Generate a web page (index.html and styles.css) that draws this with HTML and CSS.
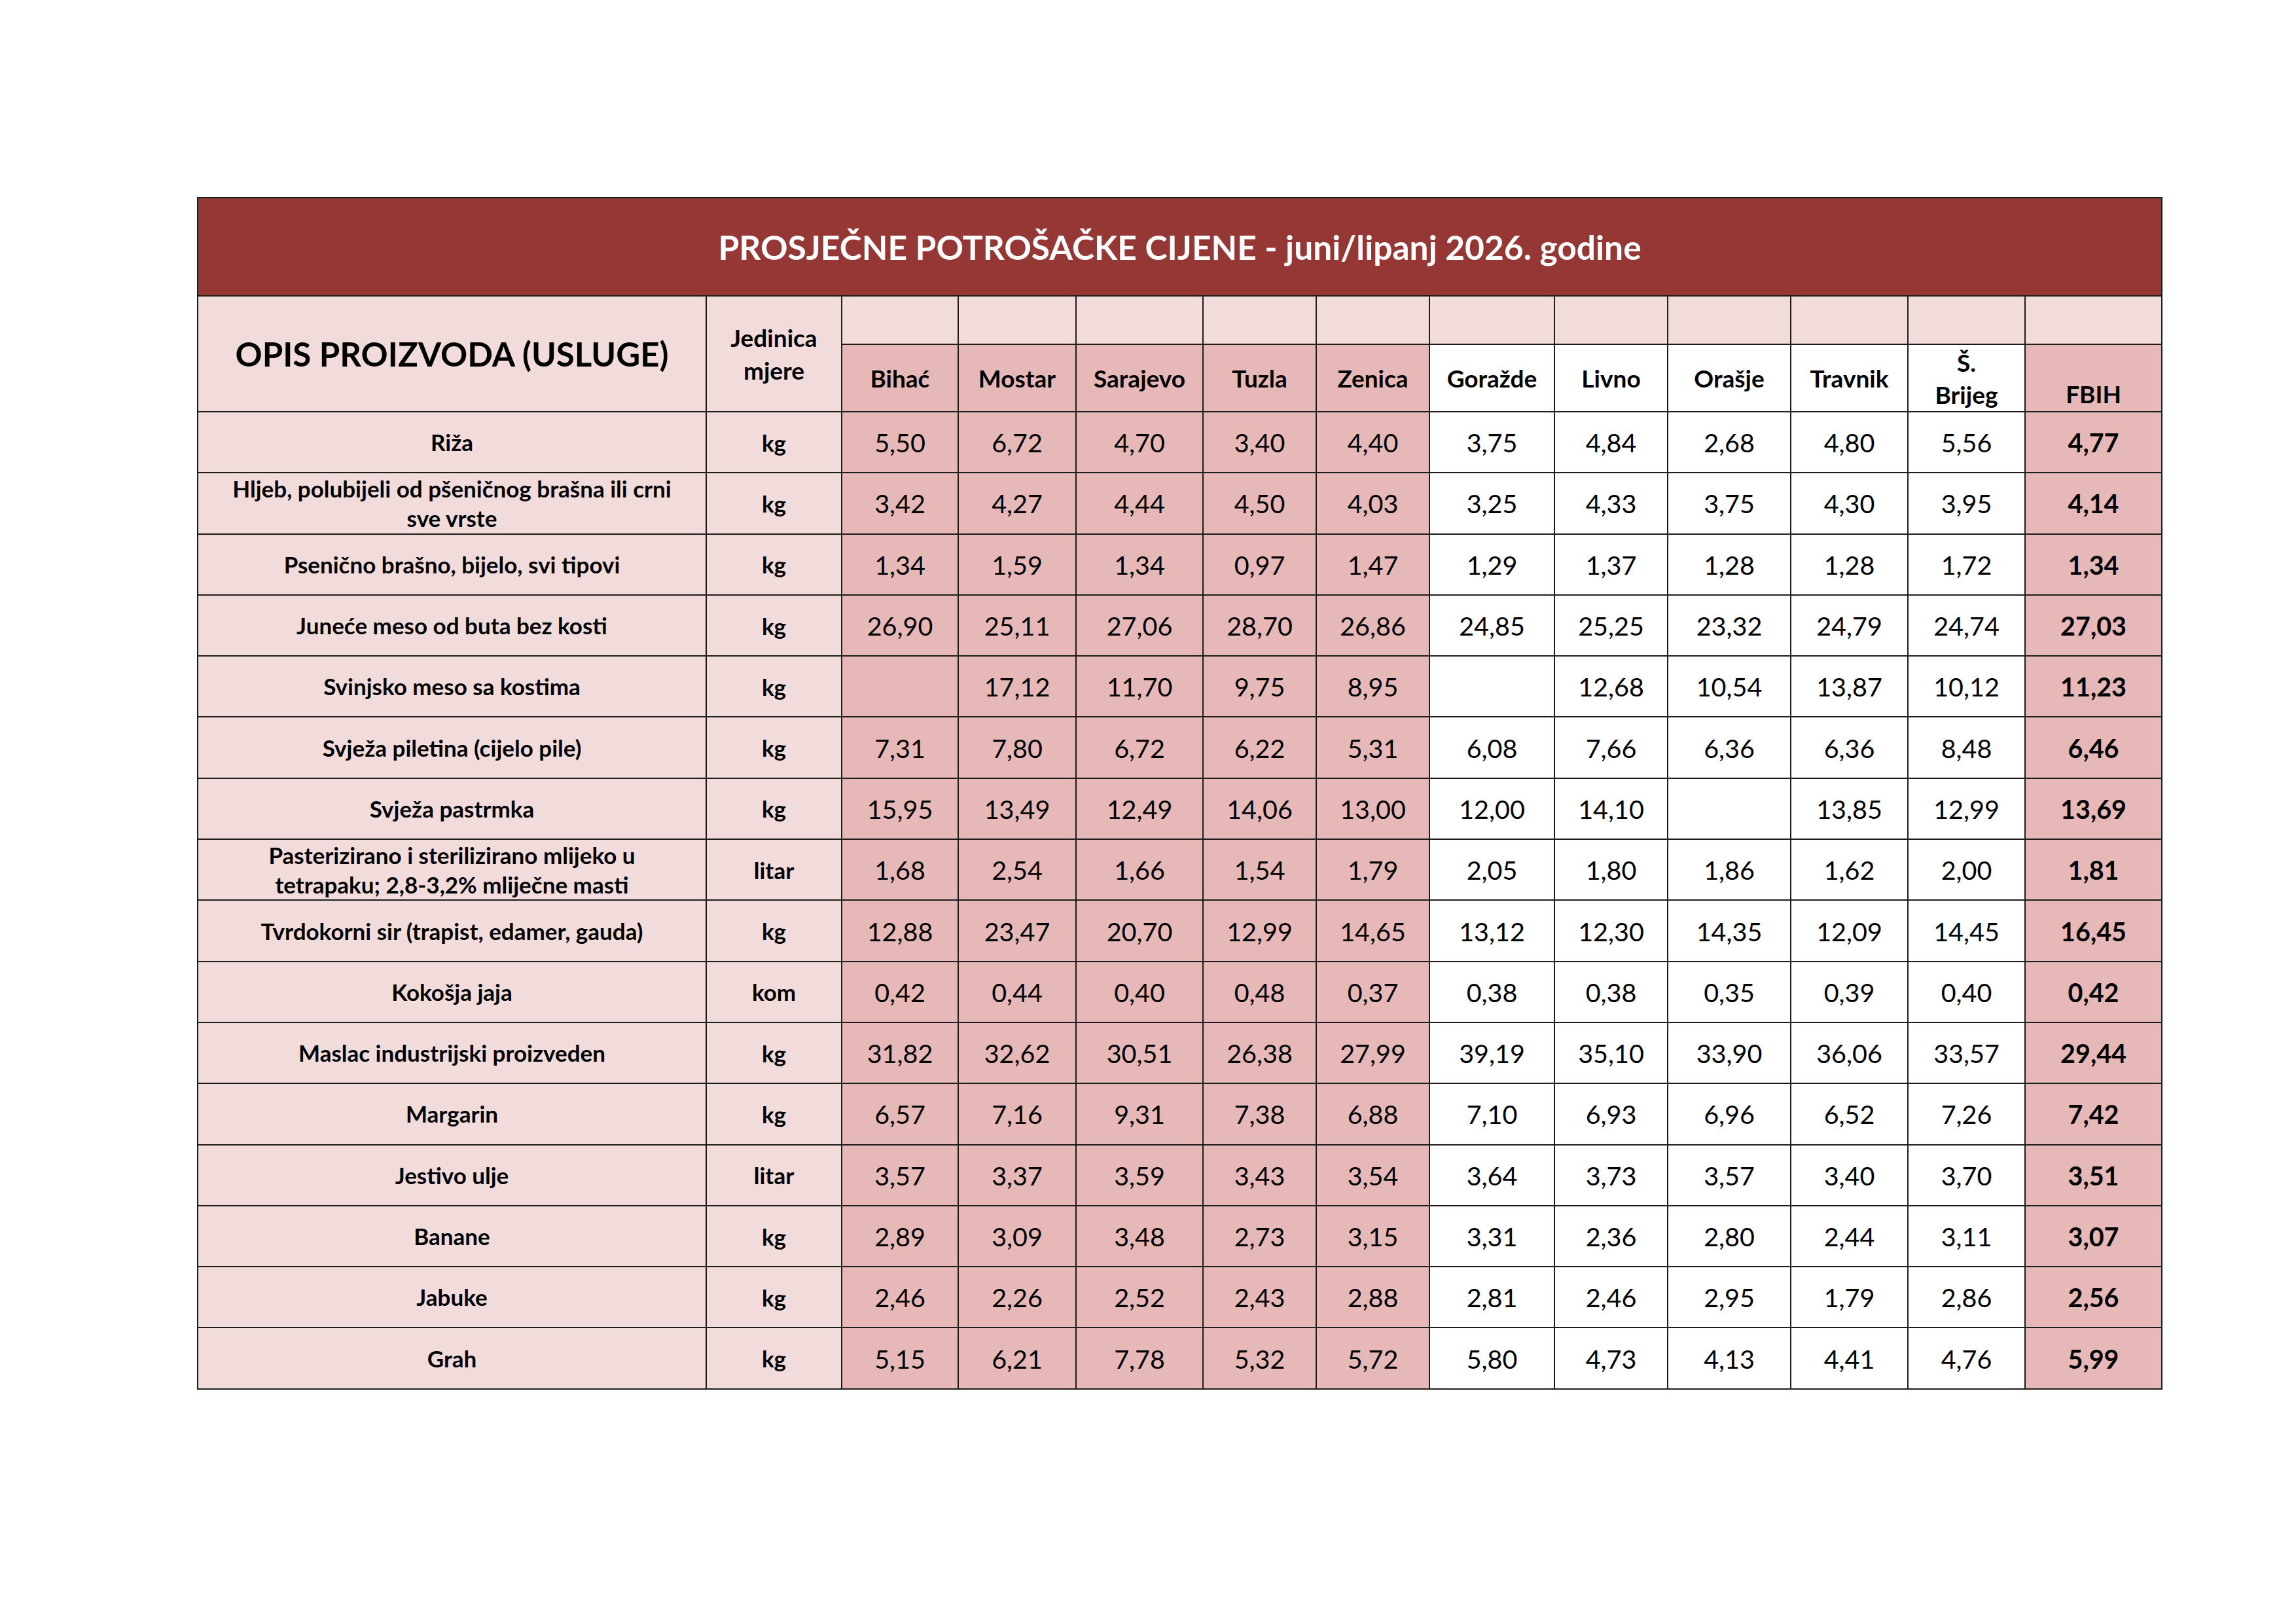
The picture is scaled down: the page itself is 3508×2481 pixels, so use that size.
FILE: index.html
```html
<!DOCTYPE html>
<html lang="bs">
<head>
<meta charset="utf-8">
<title>Prosječne potrošačke cijene</title>
<link rel="stylesheet" href="styles.css">
</head>
<body>
<div class="page">
<table class="prices">
<colgroup>
<col class="c-desc"><col class="c-unit">
<col class="c-bih"><col class="c-mos"><col class="c-sar"><col class="c-tuz"><col class="c-zen">
<col class="c-gor"><col class="c-liv"><col class="c-ora"><col class="c-tra"><col class="c-sbr">
<col class="c-fbih">
</colgroup>
<thead>
<tr class="r-title"><th colspan="13" class="title">PROSJEČNE POTROŠAČKE CIJENE - juni/lipanj 2026. godine</th></tr>
<tr class="r-h1">
<th rowspan="2" class="desc-h light">OPIS PROIZVODA (USLUGE)</th>
<th rowspan="2" class="unit-h light">Jedinica<br>mjere</th>
<th class="light"></th><th class="light"></th><th class="light"></th><th class="light"></th><th class="light"></th>
<th class="light"></th><th class="light"></th><th class="light"></th><th class="light"></th><th class="light"></th>
<th class="light"></th>
</tr>
<tr class="r-h2">
<th class="city mid">Bihać</th><th class="city mid">Mostar</th><th class="city mid">Sarajevo</th><th class="city mid">Tuzla</th><th class="city mid">Zenica</th>
<th class="city">Goražde</th><th class="city">Livno</th><th class="city">Orašje</th><th class="city">Travnik</th><th class="city">Š.<br>Brijeg</th>
<th class="city mid bottom">FBIH</th>
</tr>
</thead>
<tbody id="rows"></tbody>
</table>
</div>
<script src="app.js"></script>
</body>
</html>
```
FILE: styles.css
```css
html, body {
  margin: 0;
  padding: 0;
  background: #ffffff;
}
.page {
  padding: 301px 0 0 301px;
}
.prices {
  border-collapse: collapse;
  table-layout: fixed;
  width: 3001px;
  font-family: Lato, "Open Sans", "DejaVu Sans", sans-serif;
  color: #000000;
}
.prices th, .prices td {
  border: 2px solid #1c1c1c;
  padding: 0;
  text-align: center;
  vertical-align: middle;
}
.c-desc { width: 777px; }
.c-unit { width: 207px; }
.c-bih { width: 178px; }
.c-mos { width: 180px; }
.c-sar { width: 194px; }
.c-tuz { width: 173px; }
.c-zen { width: 173px; }
.c-gor { width: 191px; }
.c-liv { width: 173px; }
.c-ora { width: 188px; }
.c-tra { width: 179px; }
.c-sbr { width: 179px; }
.c-fbih { width: 209px; }

.r-title { height: 150px; }
.r-h1 { height: 74px; }
.r-h2 { height: 103px; }
.r-data { height: 93.3px; }

.title {
  background: #953735;
  color: #ffffff;
  font-size: 51.5px;
  font-weight: 700;
  border-color: #3a3a3a;
}
.light { background: #f2dcdb; }
.mid { background: #e6b8b7; }
.desc-h {
  font-size: 51px;
  font-weight: 700;
}
.unit-h {
  font-size: 37px;
  font-weight: 700;
  line-height: 50px;
}
.city {
  font-size: 37px;
  font-weight: 700;
  line-height: 49px;
}
.city.bottom {
  vertical-align: bottom;
  padding-bottom: 2px;
}
.label {
  background: #f2dcdb;
  font-size: 35px;
  font-weight: 700;
  line-height: 45px;
  white-space: nowrap;
}
.unit {
  background: #f2dcdb;
  font-size: 35px;
  font-weight: 700;
}
.num {
  font-size: 39.5px;
  font-weight: 400;
}
.num.mid { background: #e6b8b7; }
.num.total {
  background: #e6b8b7;
  font-weight: 700;
}
```
FILE: app.js
```js
var data = [
  ["Riža", "kg", ["5,50","6,72","4,70","3,40","4,40","3,75","4,84","2,68","4,80","5,56","4,77"]],
  ["Hljeb, polubijeli od pšeničnog brašna ili crni<br>sve vrste", "kg", ["3,42","4,27","4,44","4,50","4,03","3,25","4,33","3,75","4,30","3,95","4,14"]],
  ["Psenično brašno, bijelo, svi tipovi", "kg", ["1,34","1,59","1,34","0,97","1,47","1,29","1,37","1,28","1,28","1,72","1,34"]],
  ["Juneće meso od buta bez kosti", "kg", ["26,90","25,11","27,06","28,70","26,86","24,85","25,25","23,32","24,79","24,74","27,03"]],
  ["Svinjsko meso sa kostima", "kg", ["","17,12","11,70","9,75","8,95","","12,68","10,54","13,87","10,12","11,23"]],
  ["Svježa piletina (cijelo pile)", "kg", ["7,31","7,80","6,72","6,22","5,31","6,08","7,66","6,36","6,36","8,48","6,46"]],
  ["Svježa pastrmka", "kg", ["15,95","13,49","12,49","14,06","13,00","12,00","14,10","","13,85","12,99","13,69"]],
  ["Pasterizirano i sterilizirano mlijeko u<br>tetrapaku; 2,8-3,2% mliječne masti", "litar", ["1,68","2,54","1,66","1,54","1,79","2,05","1,80","1,86","1,62","2,00","1,81"]],
  ["Tvrdokorni sir (trapist, edamer, gauda)", "kg", ["12,88","23,47","20,70","12,99","14,65","13,12","12,30","14,35","12,09","14,45","16,45"]],
  ["Kokošja jaja", "kom", ["0,42","0,44","0,40","0,48","0,37","0,38","0,38","0,35","0,39","0,40","0,42"]],
  ["Maslac industrijski proizveden", "kg", ["31,82","32,62","30,51","26,38","27,99","39,19","35,10","33,90","36,06","33,57","29,44"]],
  ["Margarin", "kg", ["6,57","7,16","9,31","7,38","6,88","7,10","6,93","6,96","6,52","7,26","7,42"]],
  ["Jestivo ulje", "litar", ["3,57","3,37","3,59","3,43","3,54","3,64","3,73","3,57","3,40","3,70","3,51"]],
  ["Banane", "kg", ["2,89","3,09","3,48","2,73","3,15","3,31","2,36","2,80","2,44","3,11","3,07"]],
  ["Jabuke", "kg", ["2,46","2,26","2,52","2,43","2,88","2,81","2,46","2,95","1,79","2,86","2,56"]],
  ["Grah", "kg", ["5,15","6,21","7,78","5,32","5,72","5,80","4,73","4,13","4,41","4,76","5,99"]]
];
var body = document.getElementById("rows");
var html = "";
for (var i = 0; i < data.length; i++) {
  var r = data[i];
  html += '<tr class="r-data"><td class="label">' + r[0] + '</td><td class="unit">' + r[1] + '</td>';
  for (var j = 0; j < r[2].length; j++) {
    var cls = "num";
    if (j < 5) cls += " mid";
    if (j === 10) cls += " total";
    html += '<td class="' + cls + '">' + r[2][j] + '</td>';
  }
  html += '</tr>';
}
body.innerHTML = html;
```
